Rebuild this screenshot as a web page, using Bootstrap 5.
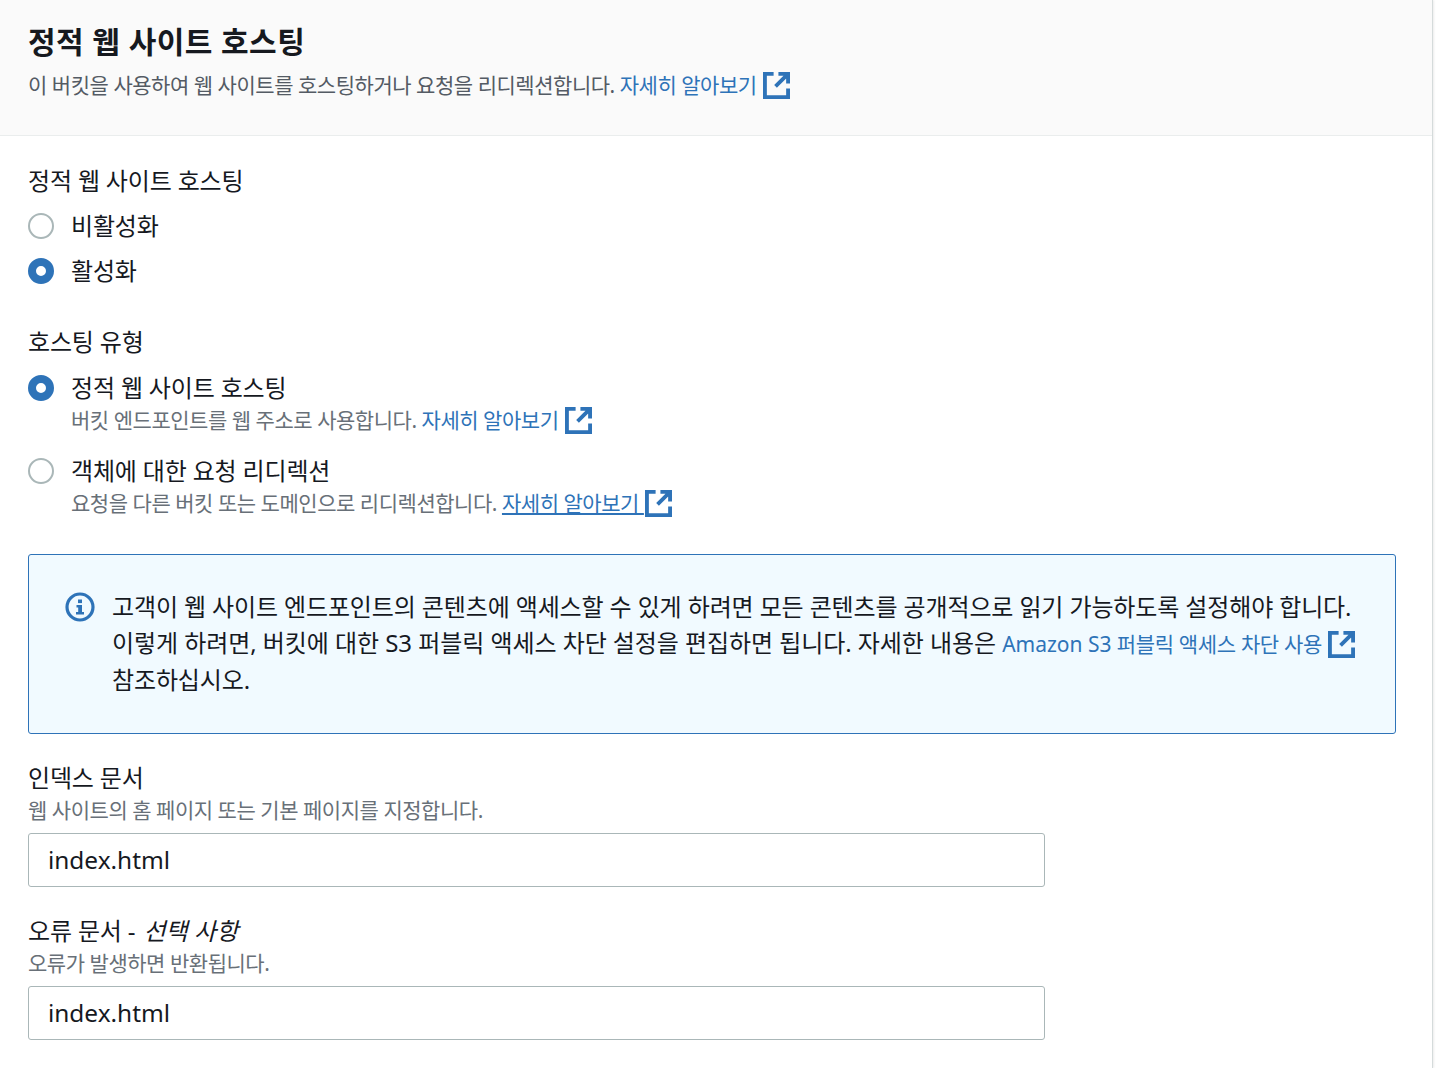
<!DOCTYPE html>
<html lang="ko">
<head>
  <meta charset="UTF-8" />
  <meta name="viewport" content="width=device-width, initial-scale=1.0"/>
  <title>정적 웹 사이트 호스팅</title>
  <link href="https://cdn.jsdelivr.net/npm/bootstrap@5.3.3/dist/css/bootstrap.min.css" rel="stylesheet"/>
  <style>
    html, body { height: 100%; }
    body { font-family: "Noto Sans", "Noto Sans CJK KR", sans-serif; background: #fff; color: #16191f; overflow: hidden; font-size: 24px; letter-spacing: -.17px; }
    .page-panel { width: 1433px; height: 1068px; border-right: 1px solid #d5dbdb; box-shadow: 1px 0 2px rgba(0,0,0,.08); }
    .panel-head { height: 136px; background: #fafafa; border-bottom: 1px solid #eaeded; padding: 21px 28px 0; }
    .panel-head h2 { font-size: 30px; line-height: 42px; font-weight: 700; margin: 0 0 6px; letter-spacing: .45px; }
    .head-desc { font-size: 21px; line-height: 32px; color: #545b64; letter-spacing: -.47px; }
    .panel-body { padding: 28px 36px 0 28px; }
    .field-label { line-height: 34px; }
    .group-gap { margin-top: 41px; }
    .opt { display: flex; align-items: flex-start; margin: 0; padding: 0; min-height: 0; }
    .opt-first { margin-top: 15px; }
    .opt-first-kind { margin-top: 16px; }
    .opt-next { margin-top: 19px; }
    .opt-next-kind { margin-top: 22px; }
    .opt .form-check-input { width: 26px; height: 26px; margin: 0 17px 0 0; border: 2px solid #aab7b8; background: #fff; flex: none; float: none; }
    .opt .form-check-input:checked { border: 8px solid #2e73b8; background-color: #fff; background-image: none; }
    .opt-label { display: block; line-height: 26px; }
    .opt-sub { font-size: 21px; line-height: 32px; height: 32px; color: #687078; letter-spacing: -.47px; margin-top: 3px; }
    .ext-link { color: #2e73b8; text-decoration: none; }
    .ext-link.hovered { text-decoration: underline; }
    .ext-ico { width: 27px; height: 27px; vertical-align: -6px; margin-left: 1px; fill: none; stroke: #2e73b8; stroke-width: 2; }
    .info-box { height: 180px; margin: 35px 0 0; background: #f1faff; border: 1px solid #2e73b8; border-radius: 3px; padding: 34px 36px 0 36px; gap: 17px; }
    .info-ico { width: 30px; height: 30px; margin-top: 3px; flex: none; }
    .info-text { line-height: 36px; letter-spacing: -.13px; white-space: nowrap; }
    .info-text .ext-link { font-size: 21px; letter-spacing: -.33px; }
    .line-two { letter-spacing: -.07px; }
    .latin { letter-spacing: 0; }
    .field-gap { margin-top: 27px; }
    .field-label em { margin-left: 2px; letter-spacing: .1px; }
    .hint { font-size: 21px; line-height: 28px; color: #687078; letter-spacing: -.47px; margin-top: 1px; }
    .doc-input.form-control { width: 1017px; height: 54px; border: 1px solid #aab7b8; border-radius: 3px; padding: 0 19px 2px; font-size: 24.4px; color: #16191f; letter-spacing: 0; margin-top: 9px; box-shadow: none; }
  </style>
</head>
<body>
  <div class="page-panel">
    <div class="panel-head">
      <h2>정적 웹 사이트 호스팅</h2>
      <div class="head-desc">이 버킷을 사용하여 웹 사이트를 호스팅하거나 요청을 리디렉션합니다. <a class="ext-link" href="#">자세히 알아보기 <svg class="ext-ico" viewBox="1 1 14 14"><path d="M9 2h5v5M14 2 7.500 8.500M6.500 2H2v12h12v-4.500"/></svg></a></div>
    </div>
    <div class="panel-body">
      <div class="field-label">정적 웹 사이트 호스팅</div>
      <div class="opt opt-first">
        <input class="form-check-input" type="radio" name="hosting" id="off">
        <label class="opt-label" for="off">비활성화</label>
      </div>
      <div class="opt opt-next">
        <input class="form-check-input" type="radio" name="hosting" id="on" checked>
        <label class="opt-label" for="on">활성화</label>
      </div>

      <div class="field-label group-gap">호스팅 유형</div>
      <div class="opt opt-first-kind">
        <input class="form-check-input" type="radio" name="kind" id="site" checked>
        <div>
          <label class="opt-label" for="site">정적 웹 사이트 호스팅</label>
          <div class="opt-sub">버킷 엔드포인트를 웹 주소로 사용합니다. <a class="ext-link" href="#">자세히 알아보기 <svg class="ext-ico" viewBox="1 1 14 14"><path d="M9 2h5v5M14 2 7.500 8.500M6.500 2H2v12h12v-4.500"/></svg></a></div>
        </div>
      </div>
      <div class="opt opt-next-kind">
        <input class="form-check-input" type="radio" name="kind" id="redir">
        <div>
          <label class="opt-label" for="redir">객체에 대한 요청 리디렉션</label>
          <div class="opt-sub">요청을 다른 버킷 또는 도메인으로 리디렉션합니다. <a class="ext-link hovered" href="#">자세히 알아보기 <svg class="ext-ico" viewBox="1 1 14 14"><path d="M9 2h5v5M14 2 7.500 8.500M6.500 2H2v12h12v-4.500"/></svg></a></div>
        </div>
      </div>

      <div class="info-box d-flex">
        <svg class="info-ico" viewBox="0 0 30 30">
          <circle cx="15" cy="15" r="13" fill="none" stroke="#2e73b8" stroke-width="3.200"/>
          <rect x="13" y="7.500" width="4" height="3.600" fill="#2e73b8"/>
          <path d="M11.500 13h5.500v7h2v2.600h-8V20h2.200v-4.400h-1.700z" fill="#2e73b8"/>
        </svg>
        <div class="info-text">고객이 웹 사이트 엔드포인트의 콘텐츠에 액세스할 수 있게 하려면 모든 콘텐츠를 공개적으로 읽기 가능하도록 설정해야 합니다.<br><span class="line-two">이렇게 하려면, 버킷에 대한 <span class="latin">S3</span> 퍼블릭 액세스 차단 설정을 편집하면 됩니다. 자세한 내용은</span> <a class="ext-link" href="#"><span class="latin">Amazon S3</span> 퍼블릭 액세스 차단 사용 <svg class="ext-ico" viewBox="1 1 14 14"><path d="M9 2h5v5M14 2 7.500 8.500M6.500 2H2v12h12v-4.500"/></svg></a><br>참조하십시오.</div>
      </div>

      <div class="field-label field-gap">인덱스 문서</div>
      <div class="hint">웹 사이트의 홈 페이지 또는 기본 페이지를 지정합니다.</div>
      <input class="form-control doc-input" type="text" value="index.html">

      <div class="field-label field-gap">오류 문서 - <em>선택 사항</em></div>
      <div class="hint">오류가 발생하면 반환됩니다.</div>
      <input class="form-control doc-input" type="text" value="index.html">
    </div>
  </div>
  <script src="https://cdn.jsdelivr.net/npm/bootstrap@5.3.3/dist/js/bootstrap.bundle.min.js"></script>
</body>
</html>
